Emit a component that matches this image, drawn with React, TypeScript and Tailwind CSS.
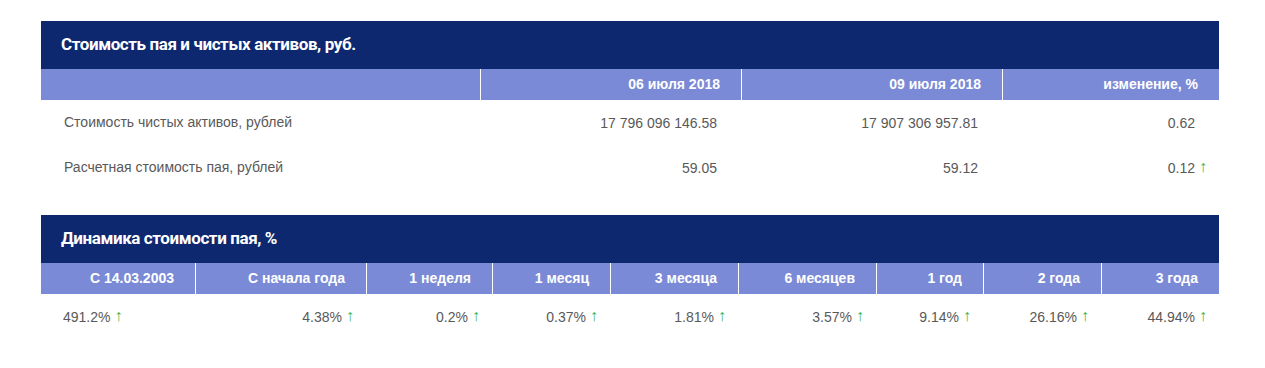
import React from 'react';

const titleFont = { fontFamily: '"Liberation Sans Narrow", "Roboto", sans-serif' };

interface Cell {
  value: string;
  up?: boolean;
}

const Up: React.FC = () => (
  <span className="absolute left-full top-[-2px] ml-[4px] text-[16px] leading-[20px] text-[#3cb44a]">↑</span>
);

const Value: React.FC<Cell> = ({ value, up }) => (
  <span className="relative leading-[18px]">
    {value}
    {up && <Up />}
  </span>
);

const TitleBar: React.FC<{ title: string }> = ({ title }) => (
  <div className="h-[48px] bg-[#0e2870] flex items-center px-[20px]">
    <span style={titleFont} className="text-white font-bold text-[17px] tracking-[-0.4px]">
      {title}
    </span>
  </div>
);

const navRows: { label: string; cells: Cell[] }[] = [
  {
    label: 'Стоимость чистых активов, рублей',
    cells: [{ value: '17 796 096 146.58' }, { value: '17 907 306 957.81' }, { value: '0.62' }],
  },
  {
    label: 'Расчетная стоимость пая, рублей',
    cells: [{ value: '59.05' }, { value: '59.12' }, { value: '0.12', up: true }],
  },
];

const periods = ['С 14.03.2003', 'С начала года', '1 неделя', '1 месяц', '3 месяца', '6 месяцев', '1 год', '2 года', '3 года'];
const dynamics = ['491.2%', '4.38%', '0.2%', '0.37%', '1.81%', '3.57%', '9.14%', '26.16%', '44.94%'];

export default function App() {
  return (
    <div
      className="w-[1265px] h-[368px] bg-white pt-[21px] pl-[41px]"
      style={{ fontFamily: '"Liberation Sans", Arial, sans-serif' }}
    >
      <div className="w-[1178px]">
        <TitleBar title="Стоимость пая и чистых активов, руб." />
        <div className="grid grid-cols-[439px_261px_261px_217px] bg-[#7b8ad6] h-[31px] text-white font-bold text-[14px]">
          <div />
          {['06 июля 2018', '09 июля 2018', 'изменение, %'].map((h) => (
            <div key={h} className="border-l border-white flex items-center justify-end pr-[21px]">
              {h}
            </div>
          ))}
        </div>
        {navRows.map((r) => (
          <div key={r.label} className="grid grid-cols-[439px_261px_261px_217px] h-[45px] text-[14px] text-[#595959]">
            <div className="flex items-center pl-[23px]">{r.label}</div>
            {r.cells.map((c, i) => (
              <div key={i} className="flex items-center justify-end pr-[24px]">
                <Value {...c} />
              </div>
            ))}
          </div>
        ))}

        <div className="mt-[25px]">
          <TitleBar title="Динамика стоимости пая, %" />
          <div className="grid grid-cols-[154px_171px_126px_118px_128px_138px_107px_118px_118px] bg-[#7b8ad6] h-[31px] text-white font-bold text-[14px]">
            {periods.map((p, i) => (
              <div
                key={p}
                className={`flex items-center justify-end pr-[21px] ${i > 0 ? 'border-l border-white' : ''}`}
              >
                {p}
              </div>
            ))}
          </div>
          <div className="grid grid-cols-[154px_171px_126px_118px_128px_138px_107px_118px_118px] h-[45px] text-[14px] text-[#595959]">
            {dynamics.map((d, i) => (
              <div
                key={d}
                className={`flex items-center ${i === 0 ? 'justify-start pl-[22px]' : 'justify-end pr-[24px]'}`}
              >
                <Value value={d} up />
              </div>
            ))}
          </div>
        </div>
      </div>
    </div>
  );
}
